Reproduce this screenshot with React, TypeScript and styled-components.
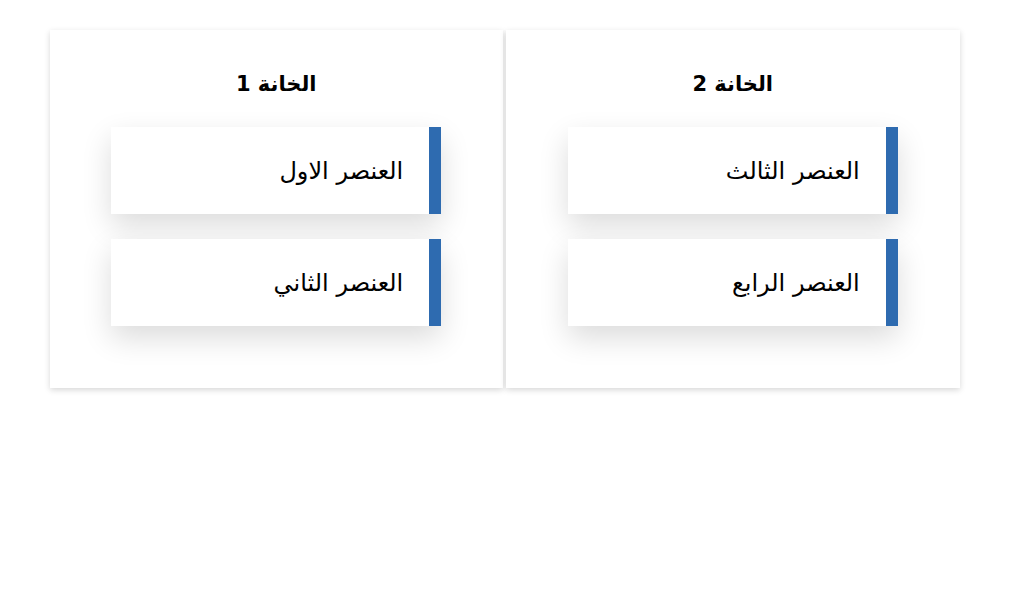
import React from "react";
import styled, { createGlobalStyle } from "styled-components";

const Global = createGlobalStyle`
  html, body { margin: 0; padding: 0; background: #fff; }
  body { font-family: "DejaVu Sans", "Noto Sans", sans-serif; color: #000; }
`;

const Board = styled.div`
  width: 910px;
  margin: 0 auto;
  padding: 30px 0 40px;
  display: flex;
  gap: 3px;
`;

const Column = styled.section`
  flex: 1;
  height: 358px;
  box-sizing: border-box;
  padding-top: 41px;
  background: #fff;
  box-shadow: 0 2px 6px rgba(0, 0, 0, 0.16);
  display: flex;
  flex-direction: column;
  align-items: center;
`;

const Title = styled.h2`
  margin: 0 0 30px;
  font-size: 21px;
  font-weight: bold;
  line-height: 26px;
  direction: rtl;
`;

const List = styled.div`
  display: flex;
  flex-direction: column;
  gap: 25px;
`;

const Card = styled.div`
  width: 330px;
  height: 87px;
  box-sizing: border-box;
  background: #fff;
  border-right: 12px solid #2e6bb0;
  padding-right: 26px;
  display: flex;
  align-items: center;
  justify-content: flex-start;
  direction: rtl;
  font-size: 24px;
  box-shadow: 0 12px 28px rgba(0, 0, 0, 0.14);
`;

const columns = [
  { title: "الخانة 1", items: ["العنصر الاول", "العنصر الثاني"] },
  { title: "الخانة 2", items: ["العنصر الثالث", "العنصر الرابع"] },
];

export default function App() {
  return (
    <>
      <Global />
      <Board>
        {columns.map((c) => (
          <Column key={c.title}>
            <Title>{c.title}</Title>
            <List>
              {c.items.map((i) => (
                <Card key={i}>{i}</Card>
              ))}
            </List>
          </Column>
        ))}
      </Board>
    </>
  );
}
